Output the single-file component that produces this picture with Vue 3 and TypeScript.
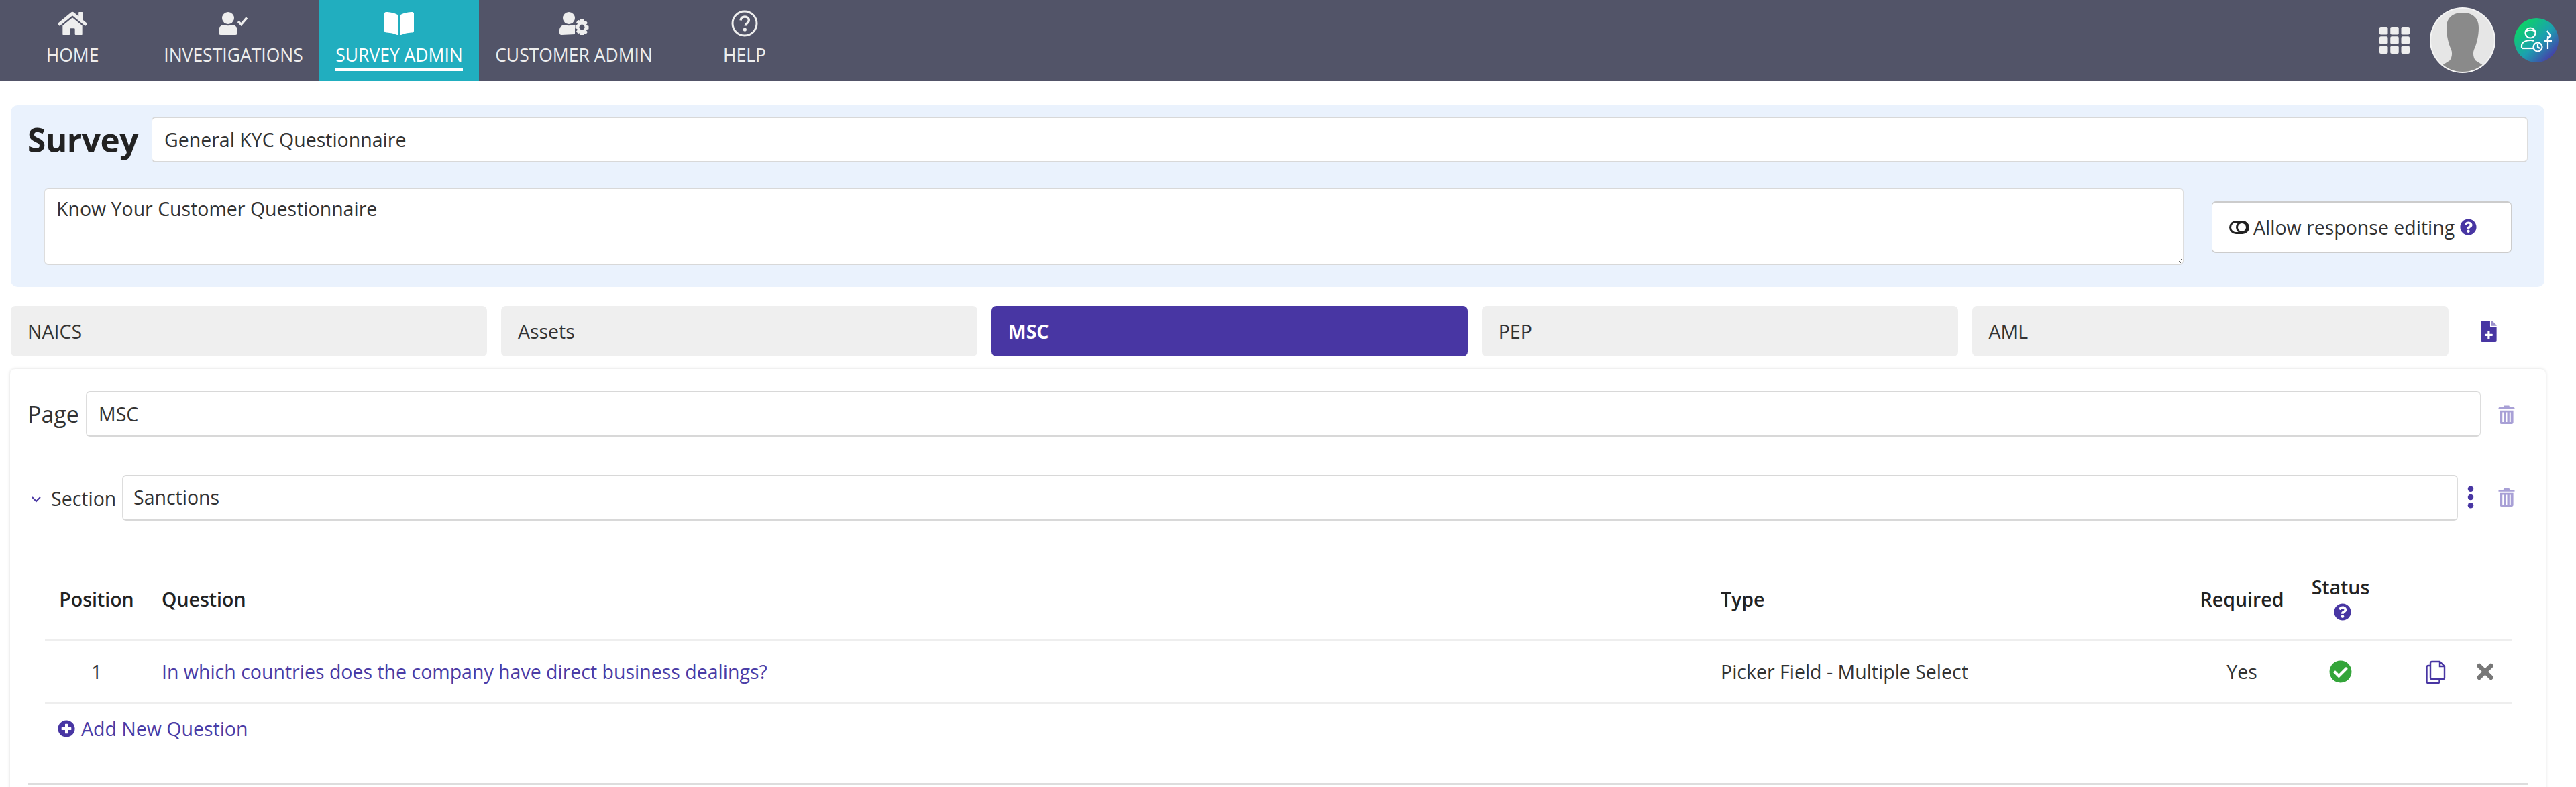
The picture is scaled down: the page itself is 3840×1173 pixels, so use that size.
<template>
  <div class="app">
    <header class="topbar">
      <nav class="menu">
        <a v-for="item in navItems" :key="item.label" :class="['menu-item', item.cls, item.active ? 'active' : '']">
          <svg class="menu-icon" :viewBox="item.box" v-html="item.svg"></svg>
          <span class="menu-label">{{ item.label }}</span>
        </a>
      </nav>
      <div class="topbar-right">
        <svg class="apps" viewBox="0 0 45 40">
          <rect v-for="c in gridCells" :key="c.x + '-' + c.y" :x="c.x" :y="c.y" width="12.5" height="11.5" rx="2" fill="#eeeeee" />
        </svg>
        <svg class="avatar" viewBox="0 0 98 98">
          <defs>
            <clipPath id="avatarClip"><circle cx="49" cy="49" r="47" /></clipPath>
          </defs>
          <circle cx="49" cy="49" r="49" fill="#f4f4f4" />
          <circle cx="49" cy="49" r="47" fill="#e6e6e6" />
          <path clip-path="url(#avatarClip)" fill="#8a8a8a" d="M49 8c-14 0-24 7-24 22 0 13 3 24 7 33 2 5 1 12-2 16l-14 9 8 10h50l8-10-14-9c-3-4-4-11-2-16 4-9 7-20 7-33 0-15-10-22-24-22z" />
        </svg>
        <svg class="brand" viewBox="0 0 66 66">
          <defs>
            <linearGradient id="brandGrad" x1="0.1" y1="0.1" x2="0.9" y2="0.9">
              <stop offset="0" stop-color="#0bd860" />
              <stop offset="0.55" stop-color="#1c9fb0" />
              <stop offset="1" stop-color="#4a35a8" />
            </linearGradient>
          </defs>
          <circle cx="33" cy="33" r="33" fill="url(#brandGrad)" />
          <g fill="none" stroke="#fff" stroke-width="2.2">
            <circle cx="24" cy="22" r="7.5" />
            <path d="M17 20c3-3 11-3 14 0" />
            <path d="M11 45v-4c0-5 6-8 13-8 2 0 4 .3 5 1" />
            <path d="M11 45h17" />
            <circle cx="35" cy="43" r="6.5" />
            <path d="M35 39v4l3 2" />
            <path d="M49 19l5 7-5 6M45 34h11" />
            <path d="M50 26v20" />
          </g>
        </svg>
      </div>
    </header>

    <main class="content">
      <section class="survey-panel">
        <div class="survey-row">
          <h1 class="survey-title">Survey</h1>
          <div class="field grow">General KYC Questionnaire</div>
        </div>
        <div class="survey-desc-row">
          <textarea class="desc" readonly>Know Your Customer Questionnaire</textarea>
          <div class="toggle-box">
            <svg class="toggle-icon" viewBox="0 0 30 20">
              <rect x="1.5" y="1.5" width="27" height="17" rx="8.5" fill="none" stroke="#222" stroke-width="3" />
              <circle cx="19" cy="10" r="7.5" fill="none" stroke="#222" stroke-width="3" />
            </svg>
            <span>Allow response editing</span>
            <svg class="help-icon" viewBox="0 0 512 512"><path :d="icons.question" /></svg>
          </div>
        </div>
      </section>

      <div class="tabs-row">
        <div class="tabs">
          <div v-for="tab in tabs" :key="tab" :class="['tab', tab === currentTab ? 'tab-on' : '']">{{ tab }}</div>
        </div>
        <svg class="add-page" viewBox="0 0 384 512">
          <path d="M224 136V0H24C10.700 0 0 10.700 0 24v464c0 13.300 10.700 24 24 24h336c13.300 0 24-10.700 24-24V160H248c-13.200 0-24-10.800-24-24zm64 204v28c0 6.600-5.400 12-12 12h-60v60c0 6.600-5.400 12-12 12h-28c-6.600 0-12-5.400-12-12v-60h-60c-6.600 0-12-5.400-12-12v-28c0-6.600 5.400-12 12-12h60v-60c0-6.600 5.400-12 12-12h28c6.600 0 12 5.400 12 12v60h60c6.600 0 12 5.400 12 12z" />
          <path opacity="0.55" d="M384 121.900c0-6.300-2.500-12.400-7-16.900L279.100 7c-4.500-4.500-10.600-7-17-7H256v128h128v-6.100z" />
        </svg>
      </div>

      <section class="page-card">
        <div class="page-row">
          <label class="page-label">Page</label>
          <div class="field grow">MSC</div>
          <svg class="trash" viewBox="0 0 26 30"><use href="#trashShape" /></svg>
        </div>

        <div class="section-block">
          <div class="section-row">
            <svg class="chevron" viewBox="0 0 16 10"><path d="M2 2l6 6 6-6" fill="none" stroke="#4836a3" stroke-width="2" /></svg>
            <label class="section-label">Section</label>
            <div class="field grow">Sanctions</div>
            <svg class="dots" viewBox="0 0 12 36">
              <circle cx="6" cy="5" r="4.500" />
              <circle cx="6" cy="18" r="4.500" />
              <circle cx="6" cy="31" r="4.500" />
            </svg>
            <svg class="trash" viewBox="0 0 26 30">
              <g id="trashShape">
                <path d="M9 1.500h8l1 2.500h6c.8 0 1.500.7 1.500 1.500V7h-25V5.500C.5 4.700 1.200 4 2 4h6z" />
                <path d="M2.500 9h21v18.500c0 1.400-1.100 2.500-2.500 2.500H5c-1.400 0-2.500-1.100-2.500-2.500V9zm4 3v15h2V12zm5.500 0v15h2V12zm5.500 0v15h2V12z" fill-rule="evenodd" />
              </g>
            </svg>
          </div>

          <div class="qtable">
            <div class="qrow qhead">
              <div class="center">Position</div>
              <div class="qcell qtitle">Question</div>
              <div class="qcell">Type</div>
              <div class="center">Required</div>
              <div class="center status-head">
                <span>Status</span>
                <svg class="help-icon" viewBox="0 0 512 512"><path :d="icons.question" /></svg>
              </div>
              <div></div>
            </div>
            <div v-for="q in questions" :key="q.position" class="qrow qbody">
              <div class="center">{{ q.position }}</div>
              <div class="qcell qtitle qlink">{{ q.text }}</div>
              <div class="qcell">{{ q.type }}</div>
              <div class="center">{{ q.required }}</div>
              <div class="center">
                <svg class="ok-icon" viewBox="0 0 512 512"><path :d="icons.check" /></svg>
              </div>
              <div class="actions">
                <svg class="copy-icon" viewBox="0 0 30 35" fill="none" stroke="#4836a3" stroke-width="2.400">
                  <path d="M9 2h12l7 7v17a2 2 0 0 1-2 2H9a2 2 0 0 1-2-2V4a2 2 0 0 1 2-2z" />
                  <path d="M21 2v7h7" />
                  <path d="M7 8H3.500A2 2 0 0 0 1.500 10v22a2 2 0 0 0 2 2h15a2 2 0 0 0 2-2v-4" />
                </svg>
                <svg class="x-icon" viewBox="0 78 352 356"><path :d="icons.times" /></svg>
              </div>
            </div>
            <div class="add-question">
              <svg class="plus-icon" viewBox="0 0 512 512"><path :d="icons.plus" /></svg>
              <span>Add New Question</span>
            </div>
          </div>
        </div>
      </section>
    </main>
  </div>
</template>

<script setup lang="ts">
import { ref } from 'vue'

interface NavItem {
  label: string
  cls: string
  box: string
  svg: string
  active?: boolean
}

interface Question {
  position: number
  text: string
  type: string
  required: string
}

const icons = {
  question: 'M504 256c0 136.997-111.043 248-248 248S8 392.997 8 256C8 119.083 119.043 8 256 8s248 111.083 248 248zM262.655 90c-54.497 0-89.255 22.957-116.549 63.758-3.536 5.286-2.353 12.415 2.715 16.258l34.699 26.31c5.205 3.947 12.621 3.008 16.665-2.122 17.864-22.658 30.113-35.797 57.303-35.797 20.429 0 45.698 13.148 45.698 32.958 0 14.976-12.363 22.667-32.534 33.976C247.128 238.528 216 254.941 216 296v4c0 6.627 5.373 12 12 12h56c6.627 0 12-5.373 12-12v-1.333c0-28.462 83.186-29.647 83.186-106.667 0-58.002-60.165-102-116.531-102zM256 338c-25.365 0-46 20.635-46 46 0 25.364 20.635 46 46 46s46-20.636 46-46c0-25.365-20.635-46-46-46z',
  check: 'M504 256c0 136.967-111.033 248-248 248S8 392.967 8 256 119.033 8 256 8s248 111.033 248 248zM227.314 387.314l184-184c6.248-6.248 6.248-16.379 0-22.627l-22.627-22.627c-6.248-6.249-16.379-6.249-22.628 0L216 308.118l-70.059-70.059c-6.248-6.248-16.379-6.248-22.628 0l-22.627 22.627c-6.248 6.248-6.248 16.379 0 22.627l104 104c6.249 6.249 16.379 6.249 22.628.001z',
  plus: 'M256 8C119 8 8 119 8 256s111 248 248 248 248-111 248-248S393 8 256 8zm144 276c0 6.600-5.400 12-12 12h-92v92c0 6.600-5.400 12-12 12h-56c-6.600 0-12-5.400-12-12v-92h-92c-6.600 0-12-5.400-12-12v-56c0-6.600 5.400-12 12-12h92v-92c0-6.600 5.400-12 12-12h56c6.600 0 12 5.400 12 12v92h92c6.600 0 12 5.400 12 12v56z',
  times: 'M242.720 256l100.070-100.070c12.280-12.280 12.280-32.190 0-44.480l-22.240-22.240c-12.280-12.280-32.190-12.280-44.480 0L176 189.280 75.930 89.210c-12.280-12.280-32.190-12.280-44.480 0L9.210 111.450c-12.280 12.280-12.280 32.190 0 44.480L109.280 256 9.210 356.070c-12.280 12.280-12.280 32.190 0 44.480l22.240 22.240c12.280 12.280 32.200 12.280 44.480 0L176 322.720l100.070 100.070c12.280 12.280 32.200 12.280 44.480 0l22.240-22.240c12.280-12.280 12.280-32.190 0-44.480L242.720 256z',
}

const navItems: NavItem[] = [
  {
    label: 'HOME',
    cls: 'nav-home',
    box: '0 0 576 512',
    svg: '<path d="M280.370 148.260L96 300.110V464a16 16 0 0 0 16 16l112.060-.290a16 16 0 0 0 15.920-16V368a16 16 0 0 1 16-16h64a16 16 0 0 1 16 16v95.640a16 16 0 0 0 16 16.050L464 480a16 16 0 0 0 16-16V300L295.670 148.260a12.190 12.190 0 0 0-15.300 0zM571.600 251.470L488 182.560V44.050a12 12 0 0 0-12-12h-56a12 12 0 0 0-12 12v72.610L318.470 43a48 48 0 0 0-61 0L4.340 251.470a12 12 0 0 0-1.600 16.900l25.500 31A12 12 0 0 0 45.150 301l235.220-193.740a12.190 12.190 0 0 1 15.300 0L530.900 301a12 12 0 0 0 16.900-1.600l25.500-31a12 12 0 0 0-1.700-16.930z"/>',
  },
  {
    label: 'INVESTIGATIONS',
    cls: 'nav-inv',
    box: '0 0 44 34',
    svg: '<circle cx="14" cy="9" r="9"/><path d="M3 34c-1.700 0-3-1.300-3-3v-4c0-5 4-8 8-8h1c1.600.8 3.200 1.200 5 1.200s3.400-.4 5-1.200h1c4 0 8 3 8 8v4c0 1.700-1.300 3-3 3z"/><path d="M29 14l4.500 4.500 8.500-10" fill="none" stroke="#eeeeee" stroke-width="3.500"/>',
  },
  {
    label: 'SURVEY ADMIN',
    cls: 'nav-survey',
    box: '0 0 576 512',
    active: true,
    svg: '<path d="M542.220 32.050c-54.800 3.110-163.720 14.430-230.960 55.590-4.640 2.840-7.270 7.890-7.270 13.170v363.870c0 11.550 12.630 18.850 23.280 13.490 69.180-34.820 169.230-44.320 218.700-46.920 16.890-.89 30.020-14.430 30.020-30.660V62.750c.01-17.710-15.350-31.740-33.770-30.700zM264.730 87.640C197.500 46.480 88.580 35.170 33.780 32.050 15.360 31.010 0 45.040 0 62.750V400.600c0 16.240 13.130 29.780 30.020 30.660 49.490 2.600 149.590 12.110 218.770 46.950 10.620 5.350 23.210-1.940 23.210-13.460V100.630c0-5.290-2.620-10.140-7.270-12.990z"/>',
  },
  {
    label: 'CUSTOMER ADMIN',
    cls: 'nav-customer',
    box: '0 0 44 34',
    svg: '<circle cx="14" cy="9" r="9"/><path d="M3 34c-1.700 0-3-1.300-3-3v-4c0-5 4-8 8-8h1c1.600.8 3.200 1.200 5 1.200 2 0 3.500-.4 5-1.200l4 1v13z"/><path fill-rule="evenodd" d="M31 11h5l.7 2.800 2.700-1 2.600 3.800-2 2 .9 1.500 2.600.7v4.400l-2.600.7-.9 1.500 2 2-2.600 3.800-2.700-1L36 34h-5l-.7-2.800-2.700 1-2.600-3.800 2-2-.9-1.500-2.600-.7v-4.400l2.600-.7.9-1.500-2-2 2.600-3.800 2.700 1zm2.500 7.500a4 4 0 1 0 .01 0z"/>',
  },
  {
    label: 'HELP',
    cls: 'nav-help',
    box: '0 0 40 40',
    svg: '<circle cx="20" cy="20" r="18" fill="none" stroke="#eeeeee" stroke-width="3"/><path d="M14 15.500c.5-3.500 3-5.500 6.300-5.500 3.500 0 6 2.200 6 5.200 0 4.400-5 4.600-5 8.300" fill="none" stroke="#eeeeee" stroke-width="3.500"/><circle cx="20.300" cy="29" r="2.600"/>',
  },
]

const gridCells: { x: number; y: number }[] = []
for (let r = 0; r < 3; r++) {
  for (let c = 0; c < 3; c++) {
    gridCells.push({ x: c * 16.25, y: r * 14.25 })
  }
}

const tabs: string[] = ['NAICS', 'Assets', 'MSC', 'PEP', 'AML']
const currentTab = ref<string>('MSC')

const questions = ref<Question[]>([
  {
    position: 1,
    text: 'In which countries does the company have direct business dealings?',
    type: 'Picker Field - Multiple Select',
    required: 'Yes',
  },
])
</script>

<style>
html,
body {
  margin: 0;
  background: #fff;
}
</style>

<style scoped>
.app {
  height: 1173px;
  overflow: hidden;
  font-family: "Open Sans", "Liberation Sans", sans-serif;
  font-size: 28.5px;
  color: #333;
  background: #fff;
}

.topbar {
  height: 120px;
  background: #525468;
  display: flex;
  justify-content: space-between;
}

.menu {
  display: flex;
}

.menu-item {
  box-sizing: border-box;
  display: flex;
  flex-direction: column;
  align-items: center;
  color: #eee;
  fill: #eee;
  height: 120px;
  padding-top: 15px;
}

.nav-home { width: 216px; margin-right: 4px; }
.nav-inv { width: 256px; }
.nav-survey { width: 238px; }
.nav-customer { width: 283px; }
.nav-help { width: 226px; }

.menu-item.active {
  background: #21aebf;
  color: #fff;
  fill: #fff;
}

.menu-icon {
  width: 44px;
  height: 40px;
}

.menu-label {
  margin-top: 11px;
  font-size: 26.5px;
  line-height: 32px;
  padding-bottom: 4px;
  white-space: nowrap;
}

.active .menu-label {
  border-bottom: 4px solid #fff;
}

.topbar-right {
  display: flex;
  align-items: center;
  padding-right: 26px;
}

.apps {
  width: 45px;
  height: 40px;
}

.avatar {
  width: 98px;
  height: 98px;
  margin-left: 30px;
}

.brand {
  width: 66px;
  height: 66px;
  margin-left: 28px;
}

.content {
  padding: 37px 45px 0 16px;
}

.survey-panel {
  width: 3777px;
  height: 271px;
  box-sizing: border-box;
  background: #eaf2fd;
  border-radius: 10px;
  padding: 17px 25px 0 25px;
}

.survey-row {
  display: flex;
  align-items: center;
}

.survey-title {
  width: 185px;
  flex-shrink: 0;
  margin: 0;
  font-size: 49.5px;
  font-weight: 700;
  color: #222;
  line-height: 68px;
  letter-spacing: -0.5px;
}

.field {
  box-sizing: border-box;
  height: 68px;
  display: flex;
  align-items: center;
  padding: 0 18px;
  background: #fff;
  border: 1px solid #ddd;
  border-top: 2px solid #d8d8d8;
  border-bottom: 2px solid #d8d8d8;
  border-radius: 6px;
  color: #333;
}

.grow {
  flex: 1;
  min-width: 0;
}

.survey-desc-row {
  display: flex;
  align-items: flex-start;
  margin-top: 38px;
  padding-left: 25px;
}

.desc {
  display: block;
  box-sizing: border-box;
  width: 3189px;
  height: 115px;
  padding: 10px 17px;
  margin: 0;
  background: #fff;
  border: 1px solid #ddd;
  border-top: 2px solid #d8d8d8;
  border-bottom: 2px solid #d8d8d8;
  border-radius: 6px;
  font: inherit;
  color: #333;
  outline: none;
}

.toggle-box {
  box-sizing: border-box;
  width: 447px;
  height: 77px;
  margin: 20px 0 0 42px;
  padding-left: 25px;
  display: flex;
  align-items: center;
  background: #fff;
  border: 1px solid #ccc;
  border-top-width: 2px;
  border-bottom-width: 2px;
  border-radius: 6px;
}

.toggle-icon {
  width: 30px;
  height: 20px;
  margin-right: 6px;
}

.help-icon {
  width: 25px;
  height: 25px;
  margin-left: 8px;
  fill: #4836a3;
}

.tabs-row {
  display: flex;
  align-items: center;
  margin-top: 28px;
}

.tabs {
  width: 3634px;
  display: grid;
  grid-template-columns: repeat(5, 1fr);
  gap: 20.5px;
}

.tab {
  height: 75px;
  box-sizing: border-box;
  background: #efefef;
  border-radius: 7px;
  padding: 0 25px;
  display: flex;
  align-items: center;
  color: #333;
}

.tab-on {
  background: #4836a3;
  color: #fff;
  font-weight: 700;
}

.add-page {
  width: 24px;
  height: 31px;
  margin-left: 48px;
  fill: #4836a3;
}

.page-card {
  width: 3780px;
  height: 640px;
  box-sizing: border-box;
  margin-top: 19px;
  margin-left: -1px;
  padding: 33px 26px 0 26px;
  background: #fff;
  border-radius: 8px;
  box-shadow: 0 0 5px rgba(0, 0, 0, 0.14);
}

.page-row {
  display: flex;
  align-items: center;
}

.page-label {
  font-size: 34px;
  width: 87px;
  flex-shrink: 0;
}

.trash {
  width: 25px;
  height: 29px;
  fill: #a8a0d6;
  flex-shrink: 0;
  margin-left: 27px;
  margin-right: 20px;
}

.page-row .trash {
  margin-left: 26px;
}

.section-block {
  margin-top: 57px;
  height: 462px;
  box-sizing: border-box;
  border-bottom: 3px solid #ddd;
}

.section-row {
  display: flex;
  align-items: center;
}

.section-row .field {
  padding: 0 16px 3px;
}

.chevron {
  width: 16px;
  height: 10px;
  margin: 4px 14px 0 5px;
  flex-shrink: 0;
}

.section-label {
  width: 106px;
  flex-shrink: 0;
  margin-top: 2px;
}

.dots {
  width: 12px;
  height: 34px;
  fill: #4836a3;
  margin: 0 0 3px 13px;
  flex-shrink: 0;
}

.section-row .trash {
  margin: 0 20px 3px 35px;
}

.qtable {
  margin: 57px 25px 0 26px;
}

.qrow {
  display: grid;
  grid-template-columns: 154px 2330px 715px 152px 142px 1fr;
  align-items: center;
}

.qhead {
  height: 120px;
  font-weight: 600;
  color: #222;
  border-bottom: 3px solid #eee;
}

.qbody {
  height: 90px;
  border-bottom: 3px solid #eee;
}

.center {
  text-align: center;
}

.qcell {
  padding-left: 14px;
}

.qtitle {
  padding-left: 20px;
}

.qlink {
  color: #4a3ca6;
}

.status-head {
  display: flex;
  flex-direction: column;
  align-items: center;
  margin-bottom: 5px;
}

.status-head .help-icon {
  width: 26px;
  height: 26px;
  margin: 5px 0 0 6px;
}

.ok-icon {
  display: block;
  width: 34px;
  height: 34px;
  margin: 0 auto;
  fill: #34a53a;
}

.actions {
  display: flex;
  align-items: center;
  padding-left: 56px;
}

.copy-icon {
  width: 30px;
  height: 35px;
}

.x-icon {
  width: 25px;
  height: 26px;
  margin-left: 46px;
  fill: #777;
}

.add-question {
  display: flex;
  align-items: center;
  margin-top: 19px;
  padding-left: 19px;
  color: #4a3ca6;
  line-height: 36px;
}

.plus-icon {
  width: 26px;
  height: 26px;
  margin-right: 9px;
  fill: #4836a3;
}
</style>
